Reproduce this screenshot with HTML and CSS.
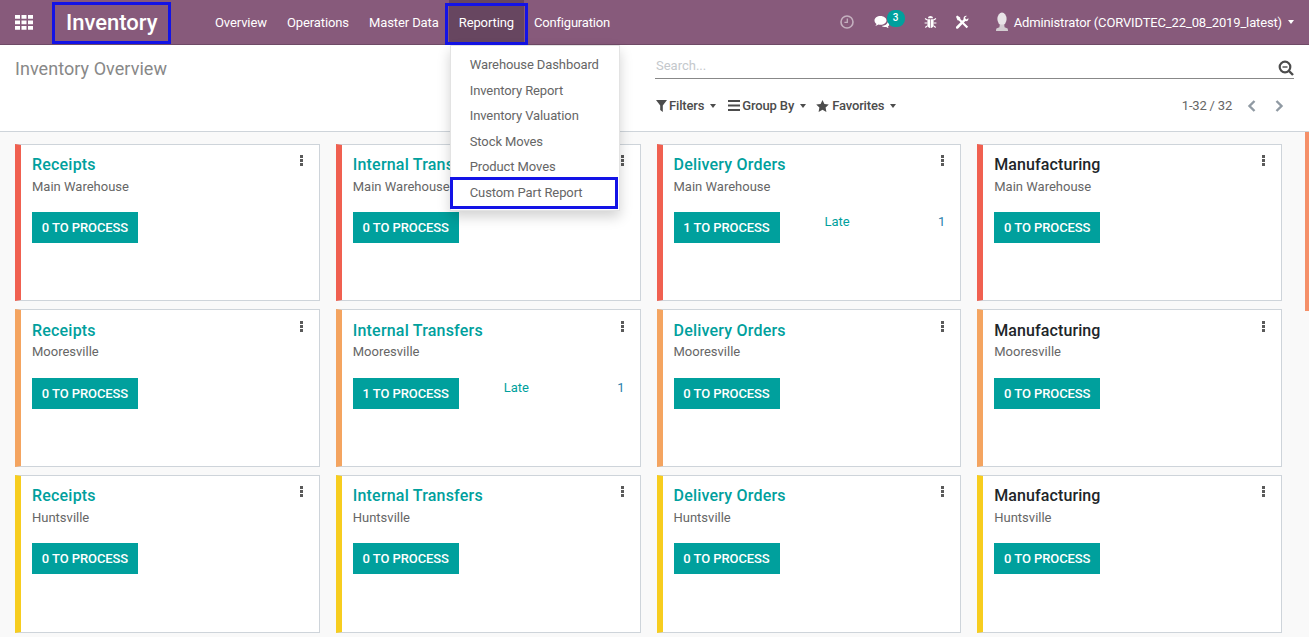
FILE: index.html
```html
<!DOCTYPE html>
<html lang="en">
<head>
  <meta charset="UTF-8">
  <title>Inventory Overview</title>
  <link rel="stylesheet" href="styles.css">
</head>
<body>
  <header class="navbar">
    <svg class="apps-icon" width="18" height="15" viewBox="0 0 18 16" preserveAspectRatio="none">
      <path fill="#fff" d="M0 0h5v4H0zM6.500 0h5v4h-5zM13 0h5v4h-5zM0 5.800h5v4H0zM6.500 5.800h5v4h-5zM13 5.800h5v4h-5zM0 11.600h5v4H0zM6.500 11.600h5v4h-5zM13 11.600h5v4h-5z"/>
    </svg>
    <div class="brand">Inventory</div>
    <nav class="menu">
      <a class="menu-link">Overview</a>
      <a class="menu-link">Operations</a>
      <a class="menu-link">Master Data</a>
      <div class="menu-open">
        <a class="menu-link menu-link-active">Reporting</a>
        <div class="mark"></div>
        <ul class="dropdown">
          <li>Warehouse Dashboard</li>
          <li>Inventory Report</li>
          <li>Inventory Valuation</li>
          <li>Stock Moves</li>
          <li>Product Moves</li>
          <li class="dropdown-marked">Custom Part Report</li>
        </ul>
      </div>
      <a class="menu-link menu-link-last">Configuration</a>
    </nav>
    <div class="systray">
      <svg class="tray-clock" width="14" height="14" viewBox="0 0 14 14">
        <circle cx="7" cy="7" r="6" fill="none" stroke="#c4b0bf" stroke-width="1.600"/>
        <path fill="none" stroke="#c4b0bf" stroke-width="1.300" d="M7.300 3.400v4H4.400"/>
      </svg>
      <div class="tray-chat">
        <svg width="16" height="14" viewBox="0 0 16 14">
          <path fill="#fff" d="M6.500 1C3 1 .5 3 .5 5.500c0 1.400.8 2.600 2 3.400-.2.800-.7 1.500-1.200 2 1.300-.1 2.400-.6 3.200-1.300.6.100 1.300.2 2 .2 3.500 0 6-2 6-4.300S10 1 6.500 1z"/>
          <path fill="#fff" d="M14 6.800c-.6 2.300-3 4-6.300 4.200.9.800 2.100 1.100 3.300 1.100.4 0 .8 0 1.200-.1.700.6 1.700 1 2.600 1-.4-.4-.8-1-.9-1.600 1-.6 1.600-1.500 1.600-2.500 0-.8-.6-1.600-1.500-2.100z"/>
        </svg>
        <span class="badge">3</span>
      </div>
      <svg class="tray-bug" width="13" height="14" viewBox="0 0 13 14">
        <path fill="#fff" d="M4 3.300C4 1.900 5.100 1 6.500 1S9 1.900 9 3.300zM3.400 4.200h2.800V13C4.500 12.800 3.400 11.500 3.400 10zM6.800 4.200h2.800V10c0 1.500-1.100 2.800-2.800 3z"/>
        <path fill="none" stroke="#fff" stroke-width="1.200" d="M3.400 5L1 3.400M9.600 5L12 3.400M3.400 8H.6M9.600 8h2.800M3.600 10.600L1.300 12.500M9.400 10.600l2.300 1.900"/>
      </svg>
      <svg class="tray-tools" width="14" height="14" viewBox="0 0 14 14">
        <path fill="#fff" d="M1 1.800L2.200.6l3 2 .1 1.300 7.900 7.800-1.600 1.600-7.800-7.900-1.300-.1z"/>
        <path fill="#fff" d="M13.400 3.300c.3 1.300-.6 2.900-2.300 2.900l-.7-.1-7.300 7.300c-.5.500-1.300.5-1.800 0s-.5-1.300 0-1.800L8.600 4.300c-.5-1.800.9-3.700 3.200-3.400L9.900 2.800l1.300 1.800z"/>
      </svg>
      <svg class="tray-avatar" width="14" height="20" viewBox="0 0 14 20">
        <ellipse cx="7" cy="7" rx="4.600" ry="6.500" fill="#e8e4e7"/>
        <path fill="#d3ccd1" d="M4.800 12.500h4.400l.4 2.700 3 1.300c.3.800.4 1.600.4 2.500H1c0-.9.100-1.700.4-2.500l3-1.300z"/>
      </svg>
      <span class="user-name">Administrator (CORVIDTEC_22_08_2019_latest)</span>
      <span class="caret caret-light"></span>
    </div>
  </header>

  <section class="panel">
    <h1 class="panel-title">Inventory Overview</h1>
    <div class="panel-right">
      <div class="search">
        <span class="search-hint">Search...</span>
        <svg width="16" height="16" viewBox="0 0 16 16">
          <circle cx="7" cy="7" r="5.300" fill="none" stroke="#4c4c4c" stroke-width="2.200"/>
          <path fill="none" stroke="#4c4c4c" stroke-width="2.400" d="M11 11l4 4"/>
          <path fill="none" stroke="#4c4c4c" stroke-width="1.400" d="M4.500 7h5"/>
        </svg>
      </div>
      <div class="filters">
        <div class="filter-set">
          <button class="filter-btn filter-first">
            <svg width="11" height="12" viewBox="0 0 11 12"><path fill="#4c4c4c" d="M0 0h11L6.800 5.500V12L4.200 10V5.500z"/></svg>
            Filters<span class="caret"></span>
          </button>
          <button class="filter-btn">
            <svg width="12" height="11" viewBox="0 0 12 11"><path fill="#4c4c4c" d="M0 0h12v2H0zM0 4.500h12v2H0zM0 9h12v2H0z"/></svg>
            Group By<span class="caret"></span>
          </button>
          <button class="filter-btn filter-last">
            <svg class="filter-star" width="13" height="12" viewBox="0 0 13 12"><path fill="#4c4c4c" d="M6.500 0l1.900 4 4.400.5-3.200 3 .8 4.400-3.900-2.200-3.900 2.200.8-4.400-3.200-3L4.600 4z"/></svg>
            Favorites<span class="caret"></span>
          </button>
        </div>
        <div class="pager">
          <span class="pager-value">1-32 / 32</span>
          <svg width="10" height="12" viewBox="0 0 10 12"><path fill="none" stroke="#909aa3" stroke-width="2.400" d="M7.500 1L2.500 6l5 5"/></svg>
          <svg width="10" height="12" viewBox="0 0 10 12"><path fill="none" stroke="#909aa3" stroke-width="2.400" d="M2.500 1l5 5-5 5"/></svg>
        </div>
      </div>
    </div>
  </section>

  <main class="board">
    <article class="card card-red">
      <div class="card-head"><h2 class="card-title">Receipts</h2><div class="dots"><i></i><i></i><i></i></div></div>
      <p class="card-sub">Main Warehouse</p>
      <div class="card-row"><button class="process-btn">0 TO PROCESS</button></div>
    </article>
    <article class="card card-red">
      <div class="card-head"><h2 class="card-title">Internal Transfers</h2><div class="dots"><i></i><i></i><i></i></div></div>
      <p class="card-sub">Main Warehouse</p>
      <div class="card-row"><button class="process-btn">0 TO PROCESS</button></div>
    </article>
    <article class="card card-red">
      <div class="card-head"><h2 class="card-title">Delivery Orders</h2><div class="dots"><i></i><i></i><i></i></div></div>
      <p class="card-sub">Main Warehouse</p>
      <div class="card-row"><button class="process-btn">1 TO PROCESS</button><div class="late"><span>Late</span><span class="late-count">1</span></div></div>
    </article>
    <article class="card card-red">
      <div class="card-head"><h2 class="card-title card-title-dark">Manufacturing</h2><div class="dots"><i></i><i></i><i></i></div></div>
      <p class="card-sub">Main Warehouse</p>
      <div class="card-row"><button class="process-btn">0 TO PROCESS</button></div>
    </article>

    <article class="card card-orange">
      <div class="card-head"><h2 class="card-title">Receipts</h2><div class="dots"><i></i><i></i><i></i></div></div>
      <p class="card-sub">Mooresville</p>
      <div class="card-row"><button class="process-btn">0 TO PROCESS</button></div>
    </article>
    <article class="card card-orange">
      <div class="card-head"><h2 class="card-title">Internal Transfers</h2><div class="dots"><i></i><i></i><i></i></div></div>
      <p class="card-sub">Mooresville</p>
      <div class="card-row"><button class="process-btn">1 TO PROCESS</button><div class="late"><span>Late</span><span class="late-count">1</span></div></div>
    </article>
    <article class="card card-orange">
      <div class="card-head"><h2 class="card-title">Delivery Orders</h2><div class="dots"><i></i><i></i><i></i></div></div>
      <p class="card-sub">Mooresville</p>
      <div class="card-row"><button class="process-btn">0 TO PROCESS</button></div>
    </article>
    <article class="card card-orange">
      <div class="card-head"><h2 class="card-title card-title-dark">Manufacturing</h2><div class="dots"><i></i><i></i><i></i></div></div>
      <p class="card-sub">Mooresville</p>
      <div class="card-row"><button class="process-btn">0 TO PROCESS</button></div>
    </article>

    <article class="card card-yellow">
      <div class="card-head"><h2 class="card-title">Receipts</h2><div class="dots"><i></i><i></i><i></i></div></div>
      <p class="card-sub">Huntsville</p>
      <div class="card-row"><button class="process-btn">0 TO PROCESS</button></div>
    </article>
    <article class="card card-yellow">
      <div class="card-head"><h2 class="card-title">Internal Transfers</h2><div class="dots"><i></i><i></i><i></i></div></div>
      <p class="card-sub">Huntsville</p>
      <div class="card-row"><button class="process-btn">0 TO PROCESS</button></div>
    </article>
    <article class="card card-yellow">
      <div class="card-head"><h2 class="card-title">Delivery Orders</h2><div class="dots"><i></i><i></i><i></i></div></div>
      <p class="card-sub">Huntsville</p>
      <div class="card-row"><button class="process-btn">0 TO PROCESS</button></div>
    </article>
    <article class="card card-yellow">
      <div class="card-head"><h2 class="card-title card-title-dark">Manufacturing</h2><div class="dots"><i></i><i></i><i></i></div></div>
      <p class="card-sub">Huntsville</p>
      <div class="card-row"><button class="process-btn">0 TO PROCESS</button></div>
    </article>

    <div class="scroll-thumb"></div>
  </main>
</body>
</html>
```

FILE: styles.css
```css
* {
  box-sizing: border-box;
}
html,
body {
  height: 100%;
}
body {
  margin: 0;
  overflow: hidden;
  background: #f9f9f9;
  color: #4c4c4c;
  font-family: Roboto, "Noto Sans", sans-serif;
  font-size: 13px;
}
h1,
h2,
p,
ul {
  margin: 0;
  padding: 0;
}

/* top bar */
.navbar {
  display: flex;
  align-items: center;
  height: 45px;
  background: #875a7b;
  border-bottom: 1px solid #6f4a66;
  color: #fff;
}
.apps-icon {
  flex: none;
  margin: 1px 0 0 15px;
}
.brand {
  width: 119px;
  height: 42px;
  margin: 2px 34px 0 19px;
  padding-left: 11px;
  border: 3px solid #1313e6;
  font-size: 22px;
  font-weight: 500;
  line-height: 36px;
}
.menu {
  display: flex;
  align-items: stretch;
  height: 44px;
  letter-spacing: -0.1px;
}
.menu-link {
  display: flex;
  align-items: center;
  height: 44px;
  padding: 0 10px;
}
.menu-link-last {
  letter-spacing: -0.2px;
}
.menu-link-active {
  background: #674660;
}
.menu-open {
  position: relative;
}
.mark {
  position: absolute;
  top: 3px;
  left: -4px;
  right: -4px;
  bottom: -1px;
  border: 3px solid #1313e6;
}
.dropdown {
  position: absolute;
  z-index: 5;
  top: 45px;
  left: 1px;
  width: 170px;
  height: 166px;
  padding-top: 6px;
  list-style: none;
  background: #fff;
  border: 1px solid #e3e3e3;
  box-shadow: 0 6px 12px rgba(0, 0, 0, 0.175);
  color: #666;
  letter-spacing: -0.1px;
}
.dropdown li {
  height: 25.500px;
  padding-left: 19px;
  line-height: 25px;
}
.dropdown .dropdown-marked {
  height: 32px;
  margin: -3px 1px 0 -1px;
  padding-left: 17px;
  border: 3px solid #1313e6;
  line-height: 25px;
}
.systray {
  display: flex;
  align-items: center;
  margin-left: auto;
  padding-right: 15px;
}
.tray-clock {
  margin-right: 20px;
}
.tray-chat {
  position: relative;
  width: 16px;
  height: 14px;
  margin-right: 34px;
}
.badge {
  position: absolute;
  top: -5px;
  left: 13px;
  width: 18px;
  height: 17px;
  border-radius: 8px;
  background: #00a09d;
  font-size: 10px;
  font-weight: 500;
  line-height: 15px;
  text-align: center;
}
.tray-bug {
  margin-right: 18px;
}
.tray-tools {
  margin-right: 26px;
}
.tray-avatar {
  margin-right: 5px;
}
.user-name {
  letter-spacing: -0.14px;
}
.caret {
  display: inline-block;
  width: 0;
  height: 0;
  margin-left: 6px;
  border-top: 4px solid #4c4c4c;
  border-left: 3px solid transparent;
  border-right: 3px solid transparent;
  vertical-align: 2px;
}
.caret-light {
  border-top-color: #fff;
}

/* control panel */
.panel {
  display: flex;
  height: 87px;
  background: #fff;
  border-bottom: 1px solid #ced4da;
}
.panel-title {
  width: 655px;
  padding: 12px 0 0 15px;
  color: #888;
  font-size: 18px;
  font-weight: 400;
  line-height: 24px;
  letter-spacing: 0.05px;
}
.panel-right {
  flex: 1;
  padding-right: 15px;
}
.search {
  display: flex;
  align-items: center;
  justify-content: space-between;
  height: 34px;
  padding: 8px 0 0 1px;
  border-bottom: 1px solid #888;
}
.search-hint {
  color: #c4c8cc;
}
.search svg {
  margin-top: 4px;
}
.filters {
  display: flex;
  align-items: center;
  justify-content: space-between;
  margin-top: 19px;
  padding-right: 10px;
}
.filter-set {
  display: flex;
  align-items: center;
  gap: 12px;
}
.filter-btn {
  display: flex;
  align-items: center;
  gap: 2px;
  padding: 0;
  border: 0;
  background: none;
  color: #4c4c4c;
  font: 500 13px Roboto, sans-serif;
  letter-spacing: -0.15px;
}
.filter-btn .caret {
  margin-left: 4px;
}
.filter-first {
  margin-left: 1px;
}
.filter-last {
  margin-left: -2px;
}
.filter-star {
  margin-right: 1px;
}
.pager {
  display: flex;
  align-items: center;
  gap: 15px;
  color: #666;
}
.pager-value {
  letter-spacing: -0.2px;
}
.pager svg + svg {
  margin-left: 2px;
}

/* kanban */
.board {
  position: relative;
  display: grid;
  grid-template-columns: repeat(4, 1fr);
  grid-auto-rows: 157.800px;
  gap: 8px 16px;
  height: 505px;
  padding: 11.600px 27px 0 15px;
}
.card {
  padding: 8.200px 15px 0 11px;
  background: #fff;
  border: 1px solid #ced4da;
  border-left: 6px solid #ccc;
}
.card-red {
  border-left-color: #f06050;
}
.card-orange {
  border-left-color: #f4a460;
}
.card-yellow {
  border-left-color: #f7cd1f;
}
.card-head {
  display: flex;
  justify-content: space-between;
}
.card-title {
  color: #00a09d;
  font-size: 16px;
  font-weight: 500;
  line-height: 23.800px;
  letter-spacing: 0.2px;
}
.card-title-dark {
  color: #212529;
  letter-spacing: 0.1px;
}
.dots {
  display: flex;
  flex-direction: column;
  gap: 1px;
  margin: 2px 1px 0 0;
}
.dots i {
  width: 3px;
  height: 3px;
  background: #5a5a5a;
}
.card-sub {
  color: #666;
  line-height: 20px;
}
.card-row {
  display: flex;
  align-items: flex-start;
  margin-top: 15.200px;
}
.process-btn {
  flex: none;
  width: 106px;
  height: 31px;
  padding: 0;
  border: 0;
  background: #00a09d;
  color: #fff;
  font: 500 13px Roboto, sans-serif;
  letter-spacing: -0.08px;
}
.late {
  display: flex;
  flex: 1;
  justify-content: space-between;
  margin-left: 45px;
  color: #00a09d;
  line-height: 20px;
}
.late-count {
  color: #2a80ac;
}
.scroll-thumb {
  position: absolute;
  top: 0;
  right: 0;
  width: 4px;
  height: 179px;
  background: #f59069;
}
```
